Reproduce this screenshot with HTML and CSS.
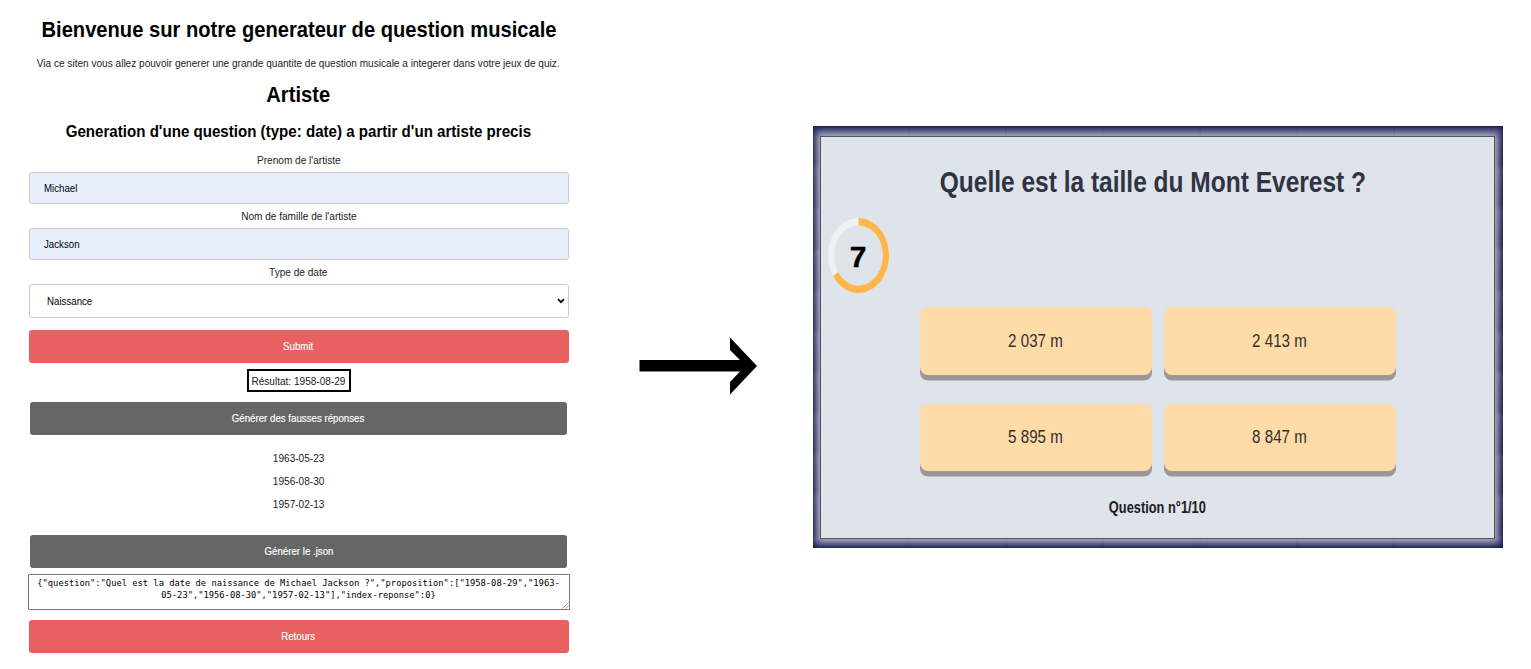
FILE: index.html
```html
<!DOCTYPE html>
<html lang="fr">
<head>
<meta charset="utf-8">
<title>Generateur de question musicale</title>
<link rel="stylesheet" href="styles.css">
</head>
<body>
<main class="page">
  <section class="generator">
    <h1 class="heading title"><span>Bienvenue sur notre generateur de question musicale</span></h1>
    <p class="intro"><span>Via ce siten vous allez pouvoir generer une grande quantite de question musicale a integerer dans votre jeux de quiz.</span></p>
    <h2 class="heading artist"><span>Artiste</span></h2>
    <h3 class="subheading"><span>Generation d'une question (type: date) a partir d'un artiste precis</span></h3>
    <div class="label"><span>Prenom de l'artiste</span></div>
    <div class="field"><span>Michael</span></div>
    <div class="label"><span>Nom de famille de l'artiste</span></div>
    <div class="field"><span>Jackson</span></div>
    <div class="label"><span>Type de date</span></div>
    <div class="field select"><span>Naissance</span>
      <svg class="chevron" viewBox="0 0 8 6"><path d="M1 1.2 4 4.2 7 1.2" fill="none" stroke="#000" stroke-width="1.7"/></svg>
    </div>
    <div class="button submit"><span>Submit</span></div>
    <div class="result"><span>Résultat: 1958-08-29</span></div>
    <div class="button dark"><span>Générer des fausses réponses</span></div>
    <div class="dates">
      <div><span>1963-05-23</span></div>
      <div><span>1956-08-30</span></div>
      <div><span>1957-02-13</span></div>
    </div>
    <div class="button dark"><span>Générer le .json</span></div>
    <div class="json">{"question":"Quel est la date de naissance de Michael Jackson ?","proposition":["1958-08-29","1963-<br>05-23","1956-08-30","1957-02-13"],"index-reponse":0}
      <svg class="grip" viewBox="0 0 8 8"><path d="M1.5 7.5 7.5 1.5M4.5 7.5 7.5 4.5" fill="none" stroke="#777" stroke-width=".7"/></svg>
    </div>
    <div class="button"><span>Retours</span></div>
  </section>
  <svg class="arrow" viewBox="0 0 118 58"><path d="M.5 23H101L91 13V.5L118 29 91 57.5V45L101 34.5H.5Z"/></svg>
  <section class="frame">
    <div class="quiz">
      <h2 class="question"><span>Quelle est la taille du Mont Everest ?</span></h2>
      <div class="timer">
        <svg viewBox="0 0 50 50" preserveAspectRatio="none"><g fill="none" stroke-width="5"><circle cx="25" cy="25" r="22.5" stroke="#eef2f5"/><path d="M25 2.5A22.5 22.5 0 1 1 6.2 37.4" stroke="#ffb74d"/></g></svg>
        <b>7</b>
      </div>
      <div class="answers">
        <div class="answer"><span>2 037 m</span></div>
        <div class="answer"><span>2 413 m</span></div>
        <div class="answer"><span>5 895 m</span></div>
        <div class="answer"><span>8 847 m</span></div>
      </div>
      <div class="progress"><span>Question n°1/10</span></div>
    </div>
  </section>
</main>
</body>
</html>
```
FILE: styles.css
```css
* { box-sizing: border-box; }
body { margin: 0; background: #fff; color: #000; font-family: "Liberation Sans", Arial, sans-serif; }
h1, h2, h3, p { margin: 0; }
.page { display: flex; height: 669px; overflow: hidden; }
.page span { display: inline-block; white-space: nowrap; flex: none; }

/* Form column */
.generator { width: 540px; margin-left: 28.5px; padding-top: 16px; display: flex; flex-direction: column; flex: none; }
.generator span { transform: scaleX(.933); }
.generator > * { flex: none; display: flex; justify-content: center; align-items: center; }
.heading { height: 26px; font-size: 21.6px; }
.title { padding-top: 2px; }
.intro { height: 14px; margin-top: 14px; font-size: 10.8px; color: #222; }
.artist { margin-top: 12px; }
.subheading { height: 22px; margin-top: 12px; font-size: 16.2px; }
.label { height: 12px; margin-top: 6px; font-size: 10.8px; color: #222; }
.subheading + .label { margin-top: 12px; }
.generator > .field { height: 32px; margin-top: 6px; padding-left: 14px; justify-content: flex-start; border: 1px solid #ccc; border-radius: 3px; background: #e8f0fe; font-size: 10.4px; }
.generator .field span { transform-origin: left; }
.generator > .select { height: 34px; padding: 0 3px 0 17px; justify-content: space-between; background: #fff; }
.chevron { width: 8px; height: 6px; }
.button { height: 33px; margin-top: 10px; border-radius: 3px; background: #e86060; color: #fff; font-size: 10.4px; -webkit-text-stroke: .15px #fff; }
.submit { margin-top: 12px; }
.dark { margin: 10px 1.5px 0; background: #666; }
.result { width: 104px; height: 23px; align-self: center; margin-top: 6px; border: 2px solid #000; font-size: 10.8px; color: #222; }
.generator > .dates { display: block; height: 90px; padding-top: 12px; text-align: center; font-size: 10.8px; line-height: 23px; color: #222; }
.generator > .json { display: block; position: relative; height: 36px; margin: 6px -1px 0; padding-top: 2px; border: 1px solid #777; border-radius: 1px; text-align: center; white-space: nowrap; font: 8.77px/12px "DejaVu Sans Mono", monospace; }
.grip { position: absolute; right: 0; bottom: 0; width: 8px; height: 8px; }

.arrow { width: 118px; height: 58px; margin: 336.5px 0 0 70.5px; flex: none; }

/* Quiz panel */
.frame {
  width: 690px; height: 422px; margin: 126px 0 0 56px; padding: 10px 7px 9px; flex: none; overflow: hidden;
  background:
    repeating-linear-gradient(90deg, transparent 0 95px, #1d204650 95px 97px),
    repeating-linear-gradient(#2b2f66, #3b4079 3px, #2b2f66 20px, #20244c 38px, #2b2f66 41px);
  box-shadow: inset 0 0 5px 1px #14183f;
}
.quiz { width: 675px; height: 403px; padding-top: 25px; border: 1px solid #55565c; background: #dfe3ea; box-shadow: 0 0 7px 3px #b9bbc9; display: flex; flex-direction: column; }
.quiz span { transform: scaleX(.817); }
.question { height: 40px; padding-right: 9px; display: flex; justify-content: center; align-items: center; font-size: 30px; color: #2f3445; }
.timer { width: 61px; height: 75px; margin: 16px 0 0 6.5px; display: grid; place-items: center; }
.timer > * { grid-area: 1 / 1; }
.timer svg { width: 61px; height: 75px; }
.timer b { padding-top: 2px; font-size: 30px; -webkit-text-stroke: .4px #000; }
.answers { display: grid; grid-template-columns: 232px 232px; gap: 29px 12px; margin: 14px 0 0 98.5px; }
.answer { height: 67.5px; display: flex; justify-content: center; align-items: center; border-radius: 8px; background: #ffdba8; box-shadow: 0 5.5px 0 #999; font-size: 18.5px; color: #33302b; }
.progress { height: 20px; margin-top: 26.5px; text-align: center; font-size: 15.7px; line-height: 20px; font-weight: bold; color: #1c1c20; }
```
